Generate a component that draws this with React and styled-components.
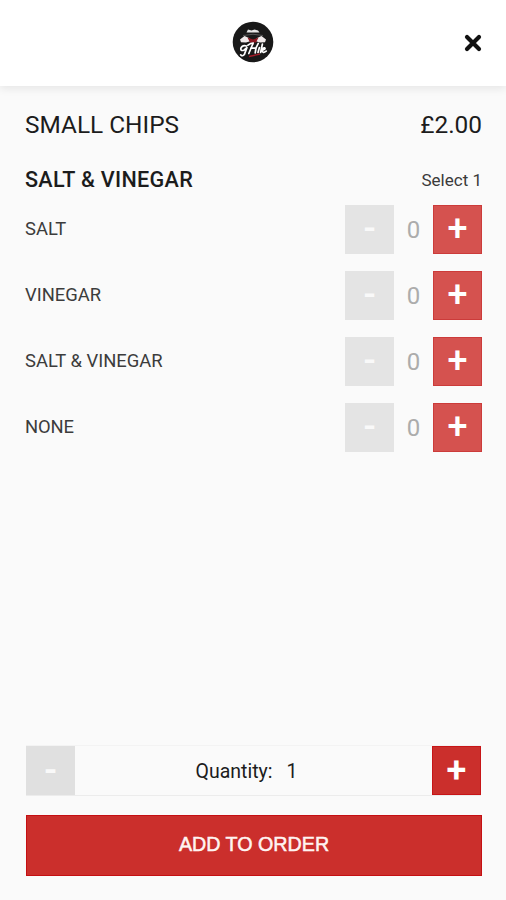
import React from "react";
import styled, { createGlobalStyle } from "styled-components";

const GlobalStyle = createGlobalStyle`
  * { box-sizing: border-box; }
  body { margin: 0; background: #fafafa; }
  button { margin: 0; padding: 0; border: 0; background: none; cursor: pointer; }
`;

const Screen = styled.div`
  height: 900px;
  display: flex;
  flex-direction: column;
  background: #fafafa;
  color: #1c1c1c;
  font-family: Roboto, "Liberation Sans", sans-serif;
  overflow: hidden;
`;

const Header = styled.header`
  flex: none;
  height: 86px;
  display: grid;
  grid-template-columns: 1fr 42px 1fr;
  align-items: center;
  padding: 0 24px 2px;
  background: #fff;
  box-shadow: 0 3px 8px rgba(0, 0, 0, 0.08);
`;

const Logo = styled.svg`
  grid-column: 2;
  width: 42px;
  height: 42px;
  display: block;
`;

const CloseButton = styled.button`
  justify-self: end;
  width: 18px;
  height: 18px;
  margin-top: 2px;
  svg { display: block; }
`;

const Content = styled.main`
  flex: 1;
  padding: 0 24px 0 25px;
`;

const TitleRow = styled.div`
  display: flex;
  justify-content: space-between;
  align-items: center;
  height: 30px;
  margin-top: 24px;
  font-size: 24.4px;
  line-height: 30px;
`;

const GroupRow = styled(TitleRow)`
  height: 28px;
  margin-top: 26px;
  font-size: 21.6px;
  font-weight: 500;
  line-height: 28px;
`;

const Hint = styled.span`
  font-size: 17px;
  font-weight: 400;
  color: #3a3a3a;
`;

const Fit = styled.span`
  letter-spacing: ${(p) => p.$spacing || 0}px;
`;

const Options = styled.div`
  display: grid;
  gap: 17px;
  margin-top: 10.5px;
`;

const Option = styled.div`
  height: 49px;
  display: flex;
  justify-content: space-between;
  align-items: center;
  font-size: 18.4px;
  color: #3c3c3c;
`;

const OptionName = styled(Fit)`
  padding-bottom: 2px;
`;

const Stepper = styled.div`
  display: grid;
  grid-template-columns: 49px 39px 49px;
  height: 49px;
`;

const Count = styled.span`
  text-align: center;
  font-size: 24px;
  line-height: 51px;
  color: #acacac;
`;

const StepButton = styled.button`
  width: 49px;
  height: 49px;
  padding-bottom: ${(p) => (p.$strong ? 2 : 1)}px;
  font-family: Roboto, sans-serif;
  font-size: 36px;
  font-weight: ${(p) => (p.$strong ? 600 : 480)};
  line-height: 44px;
  text-align: center;
  color: ${(p) => (p.$kind === "minus" ? "#f9f9f9" : "#fff")};
  background: ${(p) =>
    p.$kind === "minus" ? (p.$strong ? "#e0e0e0" : "#e4e4e4") : p.$strong ? "#cb2f2c" : "#d5524f"};
  box-shadow: ${(p) =>
    p.$kind === "minus" ? "none" : `inset 0 0 0 1px ${p.$strong ? "#c71517" : "#cc3b3a"}`};
`;

const Footer = styled.footer`
  flex: none;
  padding: 0 24px 24px 26px;
`;

const QuantityBar = styled.div`
  display: grid;
  grid-template-columns: 49px 1fr 49px;
  height: 51px;
  margin-right: 1px;
  border-top: 1px solid #f3f3f3;
  border-bottom: 1px solid #ececec;
`;

const QuantityText = styled.div`
  display: flex;
  justify-content: center;
  gap: 14px;
  padding-right: 14px;
  font-size: 19.5px;
  line-height: 52px;
`;

const AddButton = styled.button`
  display: block;
  width: 100%;
  height: 61px;
  margin-top: 19px;
  background: #cb2f2c;
  box-shadow: inset 0 0 0 1px #c50f12;
  color: #fff4f2;
  font-family: "Liberation Sans", Arial, sans-serif;
  font-size: 19.7px;
  line-height: 57px;
  padding-bottom: 3px;
  -webkit-text-stroke: 0.5px #fff4f2;
`;

function BrandMark() {
  return (
    <Logo viewBox="0 0 42 42" aria-label="Restaurant logo">
      <circle cx="21" cy="21" r="20.3" fill="#191919" />
      <path d="M14.5 11.5 16 8.5l3.5 1 3-1 3.5 1 1.5 2Z" fill="#e6e6e6" />
      <path d="M11 14.5q10-2.5 20 0" fill="none" stroke="#555" strokeWidth="1" />
      <path d="m8 18.5 4.5-3.5 4.5 2 2 3-5 1.5-5-.3Zm26 0L29.5 15 25 17l-2 3 5 1.5 5-.3Z" fill="#f0eaea" />
      <path d="m15.5 16.5 5.5 2 5.5-2-2.5 5h-6Z" fill="#8c1620" />
      <path d="M21 21.5V24" stroke="#a72834" strokeWidth="1.4" />
      <path
        d="M14.5 25q-4-1.4-5.6 2.2-.6 3.2 3 2l3-2.6-2.6 7q-1.6 2.2-3.6.2M16.8 32.5 21.2 22q-2.4 0-5.2 2.2M18.8 27.2H24M26.2 22.5q-2.8 4-3 9.5M27.4 26.5l-1.4 5M28.6 31.5l1.8-8.5M29 29.5q5-1 3.8-2.6-2.4-.4-2.8 2.4.6 3.6 4.2.8"
        fill="none"
        stroke="#fff"
        strokeWidth="1.7"
        strokeLinecap="round"
        strokeLinejoin="round"
      />
      <path d="m17 35.5 11-2.5" stroke="#a51c29" strokeWidth="1.4" />
    </Logo>
  );
}

const OPTIONS = [
  { name: "SALT", spacing: 0 },
  { name: "VINEGAR", spacing: 0 },
  { name: "SALT & VINEGAR", spacing: 0 },
  { name: "NONE", spacing: -0.1 },
];

export default function App() {
  return (
    <>
      <GlobalStyle />
      <Screen>
        <Header>
          <BrandMark />
          <CloseButton aria-label="Close">
            <svg width="18" height="18" viewBox="0 0 18 18">
              <path d="m3 3 12 12M15 3 3 15" stroke="#111" strokeWidth="4.2" strokeLinecap="round" />
            </svg>
          </CloseButton>
        </Header>
        <Content>
          <TitleRow>
            <Fit>SMALL CHIPS</Fit>
            <Fit>£2.00</Fit>
          </TitleRow>
          <GroupRow>
            <Fit $spacing={0.3}>SALT &amp; VINEGAR</Fit>
            <Hint>Select 1</Hint>
          </GroupRow>
          <Options>
            {OPTIONS.map(({ name, spacing }) => (
              <Option key={name}>
                <OptionName $spacing={spacing}>{name}</OptionName>
                <Stepper>
                  <StepButton $kind="minus">-</StepButton>
                  <Count>0</Count>
                  <StepButton $kind="plus">+</StepButton>
                </Stepper>
              </Option>
            ))}
          </Options>
        </Content>
        <Footer>
          <QuantityBar>
            <StepButton $kind="minus" $strong>-</StepButton>
            <QuantityText>
              <span>Quantity:</span>
              <span>1</span>
            </QuantityText>
            <StepButton $kind="plus" $strong>+</StepButton>
          </QuantityBar>
          <AddButton>ADD TO ORDER</AddButton>
        </Footer>
      </Screen>
    </>
  );
}
